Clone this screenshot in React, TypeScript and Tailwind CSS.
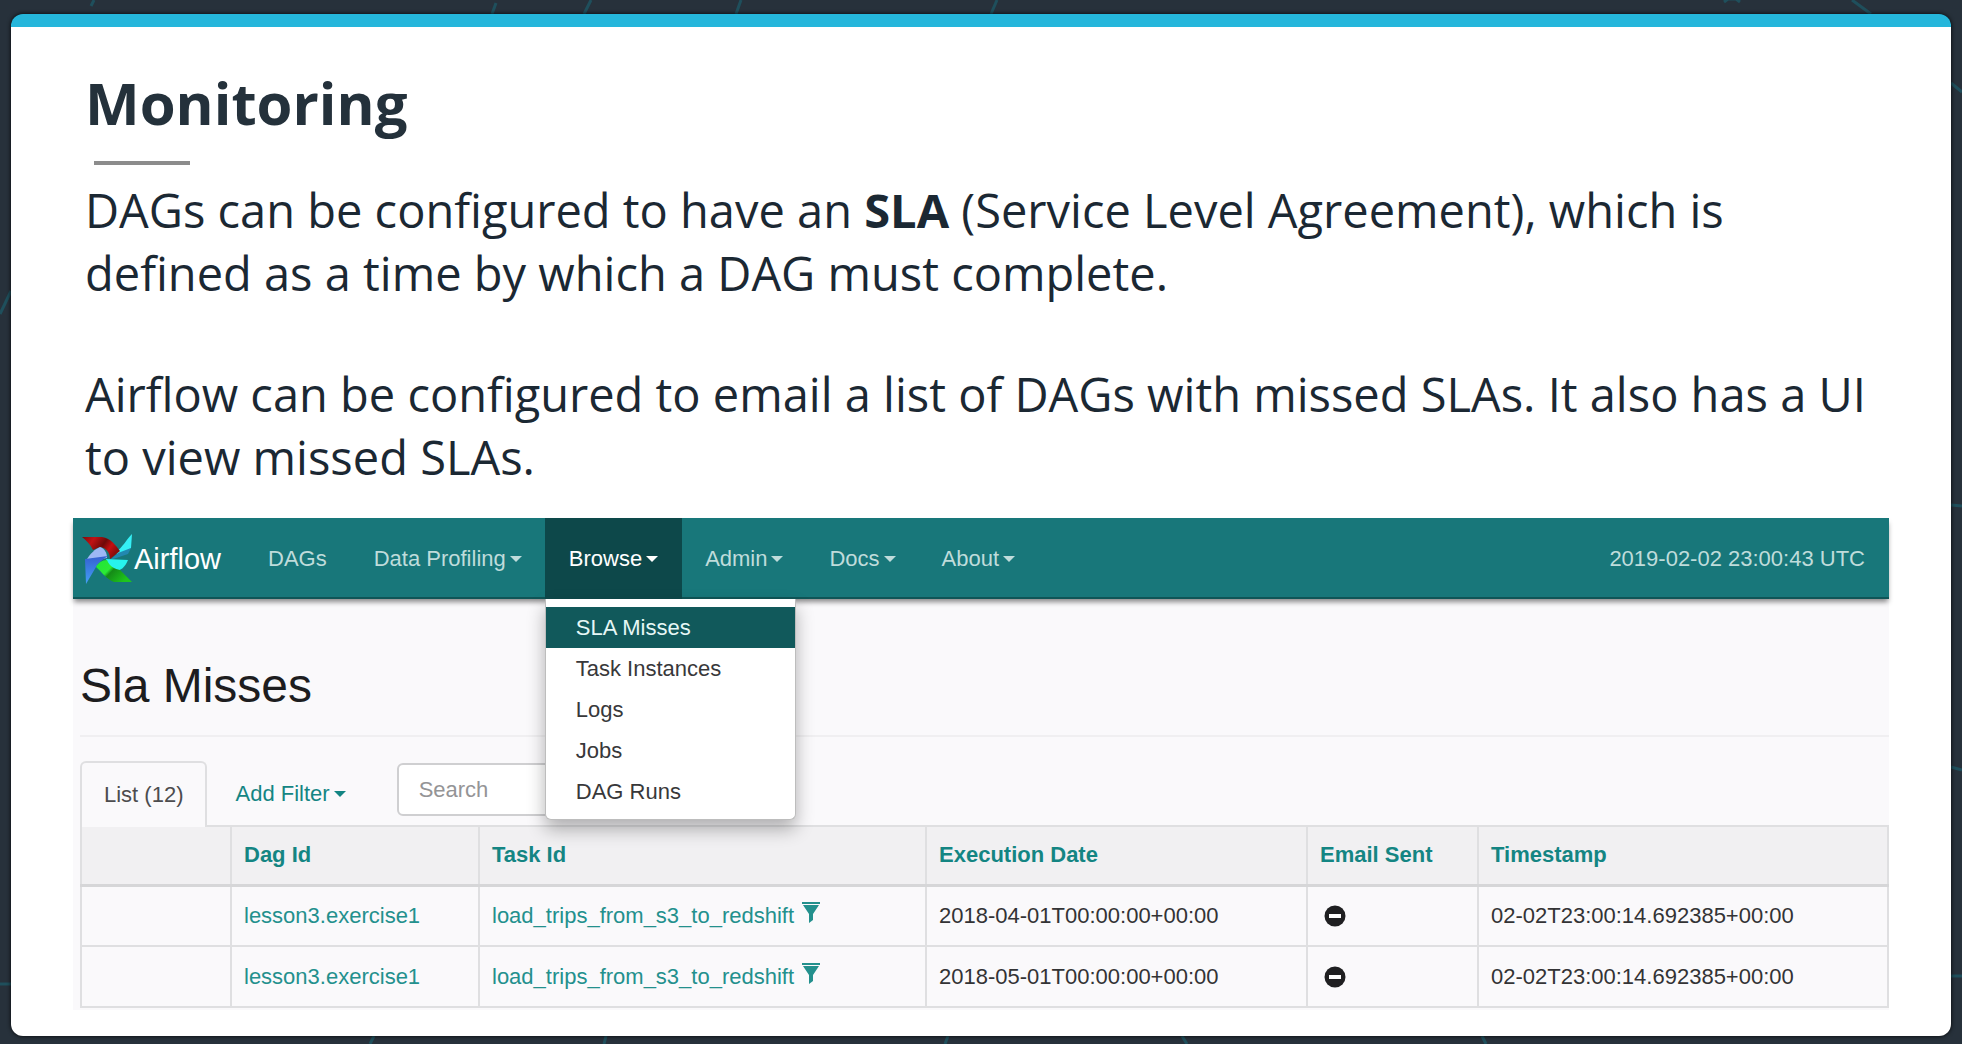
import type { ReactNode } from "react";

function Caret() {
  return (
    <svg aria-hidden="true" viewBox="0 0 12 6" className="ml-1 h-1.5 w-3 fill-current">
      <path d="M0 0h12L6 6z" />
    </svg>
  );
}

function Pinwheel() {
  return (
    <svg aria-hidden="true" viewBox="0 0 50 50" className="size-[50px] shrink-0">
      <defs>
        <linearGradient id="pw-red" x1="0" y1="0" x2="1" y2="0.4">
          <stop offset="0" stopColor="#7d0a0c" />
          <stop offset="0.3" stopColor="#c01214" />
          <stop offset="0.6" stopColor="#6f0a08" />
          <stop offset="0.8" stopColor="#c50f10" />
          <stop offset="1" stopColor="#8a0d0c" />
        </linearGradient>
        <linearGradient id="pw-green" x1="0" y1="0" x2="1" y2="0.6">
          <stop offset="0" stopColor="#1fe43a" />
          <stop offset="0.45" stopColor="#2bea35" />
          <stop offset="0.55" stopColor="#158a17" />
          <stop offset="1" stopColor="#1fc51d" />
        </linearGradient>
        <linearGradient id="pw-blue" x1="0" y1="0" x2="0" y2="1">
          <stop offset="0" stopColor="#3560d0" />
          <stop offset="1" stopColor="#43a0f7" />
        </linearGradient>
      </defs>
      <path d="M50 0 49 14 36 23 34 18C40 14 45 5 50 0z" fill="#35f0f5" />
      <path d="M36 19 49 14 46 20 28 26z" fill="#2288b0" />
      <path d="M24 25 46 26C43 33 39 37 33 37 28 34 25 30 24 25z" fill="#27f3ee" />
      <path d="M0 3 20 3C29 4 34 12 38 17L28 25C28 18 24 14 18 13L11 16C8 10 4 6 0 3z" fill="url(#pw-red)" />
      <path d="M5 25C8 20 13 15 18 13 23 15 25 19 25 24L14 26z" fill="#9db8f5" />
      <path d="M3 25 26 22C20 26 16 29 14 33L4 50z" fill="url(#pw-blue)" />
      <path d="M14 33C16 29 20 26 25 26 28 33 33 35 38 36L50 48 32 48C24 45 20 38 14 33z" fill="url(#pw-green)" />
    </svg>
  );
}

function FilterIcon() {
  return (
    <svg aria-hidden="true" viewBox="0 0 18 21" className="ml-2 inline-block h-[21px] w-[18px] fill-current align-baseline">
      <path d="M0 0h18v2H0zM1 3h16l-6 9v6l-4 3v-9z" />
    </svg>
  );
}

function MinusIcon() {
  return (
    <svg role="img" aria-label="No" viewBox="0 0 22 22" className="ml-1 size-[22px]">
      <circle cx="11" cy="11" r="10.5" fill="#1f1f21" />
      <rect x="5" y="9" width="12" height="4" fill="#fff" />
    </svg>
  );
}

function Backdrop() {
  return (
    <svg
      aria-hidden="true"
      viewBox="0 0 1962 1044"
      preserveAspectRatio="none"
      className="absolute inset-0 -z-10 size-full fill-none stroke-[#1f4f5c] stroke-3"
    >
      <path d="M94 0 91 6M496 3l-4 11M591 0l-7 14M741 0l-5 14M997 0l-6 14M1852 0l19 14M1724 2l4-3 8 0 4 3" />
      <path d="M11 291 0 314M0 984h11M1951 83l11 9M1951 505l11 1M1951 767l11 3M1951 976h11" />
      <path d="M374 1036l-4 8M606 1036l-2 8M948 1036l-3 8M1182 1036l5 8M1482 1036l4 8" />
    </svg>
  );
}

const navItems: { label: string; menu?: string[]; dropdown: boolean }[] = [
  { label: "DAGs", dropdown: false },
  { label: "Data Profiling", dropdown: true },
  { label: "Browse", dropdown: true, menu: ["SLA Misses", "Task Instances", "Logs", "Jobs", "DAG Runs"] },
  { label: "Admin", dropdown: true },
  { label: "Docs", dropdown: true },
  { label: "About", dropdown: true },
];

function BrowseMenu({ items }: { items: string[] }) {
  return (
    <ul className="absolute left-0 top-full z-20 w-[251px] rounded-b-md border border-t-0 border-[#bdbdbd] bg-white pt-2 pb-[7px] shadow-[0_9px_18px_rgba(0,0,0,0.3)]">
      {items.map((item, i) => (
        <li key={item}>
          <a
            href="#"
            className={
              i === 0
                ? "block bg-[#11595b] pl-[30px] leading-[41px] text-[#e6f7f6]"
                : "block pl-[30px] leading-[41px] text-[#38383a]"
            }
          >
            {item}
          </a>
        </li>
      ))}
    </ul>
  );
}

function NavBar() {
  return (
    <nav className="relative z-10 flex h-[81px] items-stretch bg-[#18777a] shadow-[inset_0_-2px_0_#0f5557,0_4px_5px_-1px_rgba(0,0,0,0.45)]">
      <a href="#" className="flex w-[171px] items-center pl-[9px] text-[29px] text-white">
        <Pinwheel />
        <span className="ml-0.5">Airflow</span>
      </a>
      <ul className="flex">
        {navItems.map((item) => (
          <li key={item.label} className="relative flex">
            {item.dropdown ? (
              <button
                type="button"
                aria-haspopup="menu"
                className={
                  item.menu
                    ? "flex items-center bg-[#0d484a] px-6 text-white"
                    : "flex items-center px-[23px] text-[#bfdcdb]"
                }
              >
                {item.label}
                <Caret />
              </button>
            ) : (
              <a href="#" className="flex items-center px-6 text-[#bfdcdb]">
                {item.label}
              </a>
            )}
            {item.menu && <BrowseMenu items={item.menu} />}
          </li>
        ))}
      </ul>
      <span className="ml-auto flex items-center pr-6 text-[#bfdcdb]">2019-02-02 23:00:43 UTC</span>
    </nav>
  );
}

const columns = [
  { label: "", width: "w-[150px]" },
  { label: "Dag Id", width: "w-[248px]" },
  { label: "Task Id", width: "w-[447px]" },
  { label: "Execution Date", width: "w-[381px]" },
  { label: "Email Sent", width: "w-[171px]" },
  { label: "Timestamp", width: "" },
];

const rows = [
  { dag: "lesson3.exercise1", task: "load_trips_from_s3_to_redshift", date: "2018-04-01T00:00:00+00:00", stamp: "02-02T23:00:14.692385+00:00" },
  { dag: "lesson3.exercise1", task: "load_trips_from_s3_to_redshift", date: "2018-05-01T00:00:00+00:00", stamp: "02-02T23:00:14.692385+00:00" },
];

function Cell({ children }: { children?: ReactNode }) {
  return <td className="h-[61px] border-2 border-[#dfdfe1] px-3 py-0">{children}</td>;
}

function MissesTable() {
  return (
    <table className="w-full table-fixed border-collapse border-2 border-[#dfdfe1] text-left">
      <thead>
        <tr className="bg-[#f1f0f2]">
          {columns.map((c) => (
            <th
              key={c.label}
              scope="col"
              className={`${c.width} h-[59px] border-2 border-b-3 border-[#dfdfe1] border-b-[#d6d6d8] px-3 py-0 font-bold text-[#148583]`}
            >
              {c.label && <a href="#">{c.label}</a>}
            </th>
          ))}
        </tr>
      </thead>
      <tbody>
        {rows.map((r) => (
          <tr key={r.date}>
            <Cell />
            <Cell>
              <a href="#" className="text-[#23908d]">{r.dag}</a>
            </Cell>
            <Cell>
              <a href="#" className="whitespace-nowrap text-[#23908d]">
                {r.task}
                <FilterIcon />
              </a>
            </Cell>
            <Cell>{r.date}</Cell>
            <Cell>
              <MinusIcon />
            </Cell>
            <Cell>{r.stamp}</Cell>
          </tr>
        ))}
      </tbody>
    </table>
  );
}

function AirflowPanel() {
  return (
    <section className="mx-[62px] mt-[29px] bg-[#faf9fb] pb-0.5 font-['Liberation_Sans',Arial,sans-serif] text-[22px] leading-8 text-[#333335]">
      <NavBar />
      <div className="pl-[7px]">
        <h2 className="border-b-2 border-[#f0eff1] pt-[58px] pb-5 text-[48px] leading-[58px] text-[#1d1d1f]">Sla Misses</h2>
        <div className="flex pt-6">
          <button
            type="button"
            className="relative z-1 -mb-0.5 h-[66px] rounded-t-md border-2 border-b-0 border-[#dfdfe1] bg-[#faf9fb] px-[22px] text-[#4c4c4e]"
          >
            List (12)
          </button>
          <button type="button" className="flex h-16 items-center pt-0.5 pl-7 text-[#148583]">
            Add Filter
            <Caret />
          </button>
          <input
            type="search"
            aria-label="Search"
            placeholder="Search"
            className="ml-[51px] mt-0.5 h-[53px] w-[220px] rounded-md border-2 border-[#cfcfd1] bg-white px-5 placeholder:text-[#949496]"
          />
        </div>
        <MissesTable />
      </div>
    </section>
  );
}

export default function App() {
  return (
    <div className="relative isolate min-h-screen bg-[#27313b] px-[11px] pt-3.5 pb-2">
      <Backdrop />
      <main className="rounded-xl border-t-[13px] border-[#25b6db] bg-white pb-[26px] shadow-[0_0_4px_rgba(0,0,0,0.9)]">
        <div className="px-[74px] pt-9 font-['Open_Sans','Noto_Sans',sans-serif] text-[#1b2833]">
          <h1 className="text-[58px] leading-[80px] font-bold text-[#24313b]">Monitoring</h1>
          <hr className="mt-[18px] ml-[9px] h-1 w-24 border-0 bg-[#8c8c8c]" />
          <p className="mt-3.5 text-[47px] leading-[63px]">
            DAGs can be configured to have an <strong className="font-bold">SLA</strong> (Service Level Agreement), which is
            defined as a time by which a DAG must complete.
          </p>
          <p className="mt-[58px] text-[47px] leading-[63px]">
            Airflow can be configured to email a list of DAGs with missed SLAs. It also has a UI to view missed SLAs.
          </p>
        </div>
        <AirflowPanel />
      </main>
    </div>
  );
}
